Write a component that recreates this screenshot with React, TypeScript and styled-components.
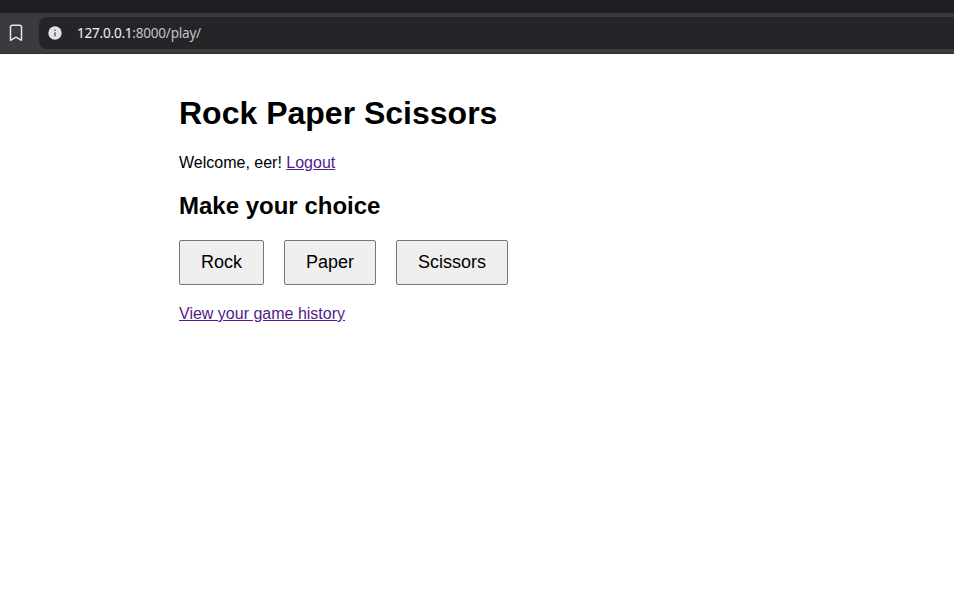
import React from 'react';
import styled, { createGlobalStyle } from 'styled-components';

const GlobalStyle = createGlobalStyle`
  *, *::before, *::after { box-sizing: border-box; }
  body { margin: 0; background: #fff; overflow: hidden; }
`;

const Browser = styled.div`
  display: flex;
  flex-direction: column;
  height: 603px;
`;

const TabStrip = styled.div`
  height: 13px;
  flex: none;
  background: #1f1e23;
`;

const Toolbar = styled.div`
  display: flex;
  align-items: center;
  flex: none;
  height: 41px;
  padding-left: 9px;
  background: #3b3a3f;
  border-bottom: 1px solid #302f34;
`;

const BookmarkIcon = styled.svg`
  display: block;
  width: 14px;
  height: 18px;
  flex: none;
`;

const AddressBar = styled.div`
  display: flex;
  align-items: center;
  flex: 1;
  height: 32px;
  margin-left: 16px;
  padding-left: 9px;
  gap: 15px;
  border-radius: 8px 0 0 8px;
  background: #252429;
`;

const InfoIcon = styled.svg`
  display: block;
  width: 14px;
  height: 14px;
  flex: none;
`;

const Address = styled.span`
  font: 13.6px/18px "Noto Sans", "Open Sans", sans-serif;
  letter-spacing: -0.25px;
  color: #c3c2c6;
  white-space: nowrap;
`;

const Host = styled.span`
  color: #f4f4f6;
`;

const Page = styled.main`
  width: 600px;
  margin-left: 179px;
  padding-top: 41px;
  color: #000;
  font: 16px/18px "Liberation Sans", Arial, sans-serif;
`;

const Title = styled.h1`
  margin: 0;
  font-size: 32px;
  line-height: 37px;
`;

const Welcome = styled.p`
  margin: 22px 0 20px;
`;

const Subtitle = styled.h2`
  margin: 0;
  font-size: 24px;
  line-height: 28px;
`;

const Choices = styled.div`
  display: flex;
  gap: 20px;
  margin: 20px 0;
`;

const ChoiceButton = styled.button<{ $width: number }>`
  width: ${({ $width }) => $width}px;
  height: 45px;
  padding: 0;
  border: 1px solid #767676;
  border-radius: 2px;
  background: #efefef;
  color: #000;
  font: 18px/21px "Liberation Sans", Arial, sans-serif;
`;

const Link = styled.a`
  color: #551a8b;
  text-decoration: underline;
`;

const choices = [
  { label: 'Rock', width: 85 },
  { label: 'Paper', width: 92 },
  { label: 'Scissors', width: 112 },
];

export default function App() {
  return (
    <Browser>
      <GlobalStyle />
      <TabStrip />
      <Toolbar>
        <BookmarkIcon viewBox="0 0 14 18" fill="none" stroke="#e6e5e9" strokeWidth="1.5" strokeLinejoin="round">
          <path d="M1.5 3Q1.5 1.2 3.3 1.2H10.7Q12.5 1.2 12.5 3V16.3L7 13.2L1.5 16.3Z" />
        </BookmarkIcon>
        <AddressBar>
          <InfoIcon viewBox="0 0 14 14">
            <circle cx="7" cy="7" r="6.7" fill="#e3e2e7" />
            <path d="M7 6.2V10.2" stroke="#4a494e" strokeWidth="1.3" />
            <circle cx="7" cy="4.3" r="0.8" fill="#4a494e" />
          </InfoIcon>
          <Address>
            <Host>127.0.0.1</Host>:8000/play/
          </Address>
        </AddressBar>
      </Toolbar>
      <Page>
        <Title>Rock Paper Scissors</Title>
        <Welcome>
          Welcome, eer! <Link href="#logout">Logout</Link>
        </Welcome>
        <Subtitle>Make your choice</Subtitle>
        <Choices>
          {choices.map(({ label, width }) => (
            <ChoiceButton key={label} $width={width}>{label}</ChoiceButton>
          ))}
        </Choices>
        <Link href="#history">View your game history</Link>
      </Page>
    </Browser>
  );
}
